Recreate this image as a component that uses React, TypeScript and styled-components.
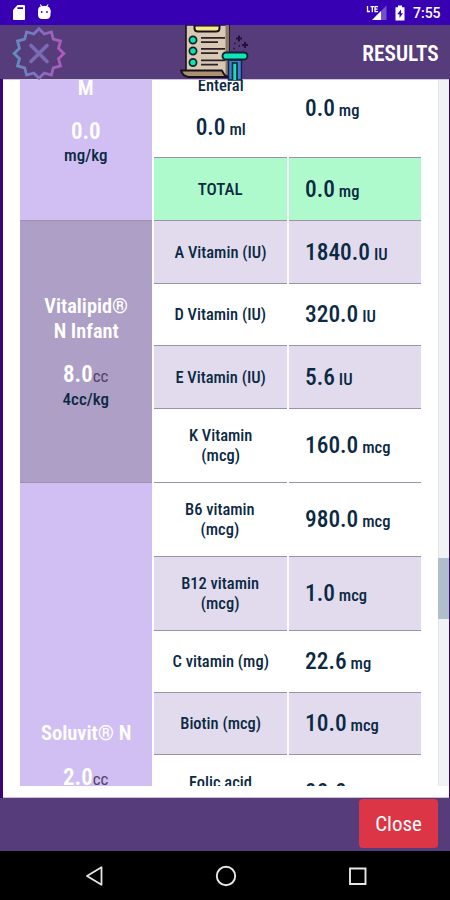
import React from "react";
import styled, { createGlobalStyle, css } from "styled-components";

const Global = createGlobalStyle`
  * { box-sizing: border-box; }
  body { margin: 0; background: #000; font-family: Roboto, sans-serif; font-stretch: 75%; color: #0b2944; }
`;

const Screen = styled.div`
  width: 450px;
  height: 900px;
  display: flex;
  flex-direction: column;
  overflow: hidden;
  background: #3b0478;
`;

const StatusBar = styled.div`
  height: 25px;
  flex: none;
  display: flex;
  align-items: center;
  justify-content: space-between;
  padding: 1px 8px 0 12px;
  background: #3700b3;
  color: #fff;
`;

const StatusGroup = styled.div`
  display: flex;
  align-items: center;
`;

const Clock = styled.span`
  width: 29px;
  margin-left: 7px;
  font-size: 14px;
  font-weight: 500;
  font-stretch: 100%;
`;

const Header = styled.header`
  position: relative;
  z-index: 1;
  height: 54px;
  flex: none;
  display: grid;
  grid-template-columns: 168px 70px 1fr;
  align-items: start;
  padding: 0 11px 0 12px;
  background: #573c7b;
  color: #fff;
`;

const Title = styled.div`
  justify-self: end;
  padding-top: 16px;
`;

const Panel = styled.main`
  height: 719px;
  flex: none;
  margin: 0 1.5px 0 2.5px;
  border-top: 1px solid #cfc5dc;
  border-bottom: 1px solid #c9bfd6;
  background: #fff;
  display: flex;
  align-items: flex-start;
`;

const Viewport = styled.div`
  height: 706px;
  flex: 1;
  overflow: hidden;
  padding-left: 17px;
`;

const Table = styled.div`
  display: grid;
  grid-template-columns: 132.5px 133.5px 132.5px;
  column-gap: 1.5px;
  grid-template-rows: 78px 63px 62.5px 62.5px 62.5px 74.5px 73.5px 74px 62px 62.5px 74px;
`;

const tones = { plain: "#fff", total: "#affacd", tinted: "#e1dbed", lilac: "#d1bff3", mauve: "#ae9fc6" };
type Tone = keyof typeof tones;

const Cell = styled.div<{ $tone: Tone }>`
  display: flex;
  align-items: center;
  justify-content: center;
  text-align: center;
  background: ${p => tones[p.$tone]};
  border-bottom: 1.5px solid #9b92a9;
`;

const ValueCell = styled(Cell)<{ $raise?: number }>`
  justify-content: flex-start;
  padding: 2px 0 ${p => p.$raise || 0}px 16.5px;
  text-align: left;
`;

const GroupCell = styled(Cell)<{ $span: number; $top: number }>`
  grid-row: span ${p => p.$span};
  flex-direction: column;
  justify-content: flex-start;
  padding-top: ${p => p.$top}px;
`;

const Text = styled.div<{ $size: number; $lh: number; $weight?: number; $sx?: number; $origin?: string; $white?: boolean; $mt?: number }>`
  font-size: ${p => p.$size}px;
  line-height: ${p => p.$lh}px;
  font-weight: ${p => p.$weight || 500};
  white-space: pre;
  margin-top: ${p => p.$mt || 0}px;
  ${p => p.$white && css`color: #fff;`}
  transform: scaleX(${p => p.$sx || 1});
  transform-origin: ${p => p.$origin || "center"};
`;

const Unit = styled.span`
  margin-left: 4px;
  font-size: 17px;
  font-weight: 500;
`;

const Dose = styled.span`
  color: #fff;
  font-weight: 600;
`;

const FaintUnit = styled.span`
  font-size: 17px;
  font-weight: 400;
  color: #50466c;
`;

const Scrollbar = styled.div`
  width: 10.5px;
  height: 706px;
  flex: none;
  padding-top: 478px;
  background: #f0f2f3;
  border-left: 1px solid #e1e5e7;
`;

const Thumb = styled.div`
  height: 61px;
  margin-left: -1px;
  background: #aebfc9;
`;

const Footer = styled.footer`
  height: 53px;
  flex: none;
  display: flex;
  justify-content: flex-end;
  align-items: flex-start;
  padding: 1px 12px 0 0;
  background: #573c7b;
`;

const CloseButton = styled.button`
  width: 79px;
  height: 49px;
  display: flex;
  align-items: center;
  justify-content: center;
  padding: 1px 0 0;
  border: 0;
  border-radius: 4px;
  background: #dc3545;
  color: #fff;
  font-family: inherit;
  font-stretch: inherit;
`;

const NavBar = styled.nav`
  height: 49px;
  flex: none;
  display: flex;
  align-items: center;
  justify-content: space-between;
  padding: 0 81px 0 82px;
  background: #000;
`;

const starPoints = (n: number, outer: number, inner: number, c: number) =>
  Array.from({ length: n * 2 }, (_, i) => {
    const r = i % 2 ? inner : outer;
    const a = (Math.PI * i) / n;
    return `${(c + r * Math.cos(a)).toFixed(2)},${(c + r * Math.sin(a)).toFixed(2)}`;
  }).join(" ");

const Badge = () => (
  <svg width="54" height="55" viewBox="0 0 54 55">
    <defs>
      <linearGradient id="badge" gradientUnits="userSpaceOnUse" x1="1" y1="28" x2="53" y2="28">
        <stop offset="0" stopColor="#5d91bd" />
        <stop offset=".5" stopColor="#806fbf" />
        <stop offset="1" stopColor="#b557bb" />
      </linearGradient>
    </defs>
    <g fill="none" stroke="url(#badge)" strokeWidth="2.8">
      <polygon points={starPoints(12, 24.8, 20.2, 27)} transform="translate(0 1.5)" />
      <path d="M19 20.500L35 36.500M35 20.500L19 36.500" stroke="#7c6bb4" strokeWidth="3.600" strokeLinecap="round" />
    </g>
  </svg>
);

const Scroll = () => (
  <svg width="70" height="56" viewBox="180 25 70 56" style={{ display: "block" }}>
    <path d="M186 25h43v51h-43z" fill="#d8c8b4" stroke="#17131c" strokeWidth="1.600" />
    <path d="M225.500 25h3.500v50h-3.500z" fill="#8d7667" />
    <path d="M194.500 24v4q0 3.500 3.500 3.500h18q3.500 0 3.500-3.500v-4" fill="#fde98b" stroke="#17131c" strokeWidth="2" />
    <path d="M194.500 25.800h25" stroke="#17131c" strokeWidth="1.500" />
    {[40, 51, 62.5].map(y => (
      <g key={y}>
        <circle cx="193" cy={y} r="3.600" fill="#14dfae" stroke="#12232b" strokeWidth="1.700" />
        <path d={`M201 ${y - 2.2}h24M201 ${y + 2.2}h17`} stroke="#2a2026" strokeWidth="1.800" />
      </g>
    ))}
    <path d="M181 70.500h41q2 5 5.500 6.500h-39q-6-1-7.500-6.500z" fill="#ad9073" stroke="#17131c" strokeWidth="2" strokeLinejoin="round" />
    <path d="M228.500 60h13v20h-13z" fill="#3b82d2" stroke="#182348" strokeWidth="1.500" />
    <path d="M232.500 80v-17h4.500v17" fill="#16dfc6" stroke="#12232b" strokeWidth="1.600" />
    <rect x="222.500" y="52.500" width="25" height="7" rx="3.500" fill="#0fe5ba" stroke="#12232b" strokeWidth="1.900" />
    <path d="M239 35.500v6M236 38.500h6M245 42v6M242 45h6" stroke="#21132f" strokeWidth="1.900" />
    <path d="M234 43.500h1.500M238.500 46h1.500M233.500 48.500h1.500" stroke="#21132f" strokeWidth="1.500" />
  </svg>
);

const StatusLeft = () => (
  <svg width="42" height="18" viewBox="0 0 42 18" fill="#fff">
    <path d="M5.500 1H12q1 0 1 1v13q0 1-1 1H2q-1 0-1-1V6zM5.500 3.200v1.800h5.500v-1.800z" fillRule="evenodd" />
    <path d="M26 6.500Q26 3 29 2.200L27.800.8l.8-.6L30.200 2h4L35.800.2l.8.6L35.400 2.200Q38.500 3.500 38.500 6.500V9h-12.500z" />
    <path d="M26 6h12.500v4.500q0 4.500-4.500 4.500h-3.500q-4.500 0-4.500-4.500z" />
    <circle cx="29.700" cy="8" r=".9" fill="#3700b3" /><circle cx="35" cy="8" r=".9" fill="#3700b3" />
  </svg>
);

const StatusRight = () => (
  <svg width="40" height="18" viewBox="367 4 40 18">
    <path d="M387.500 5.500V20H373z" fill="#7652ca" />
    <path d="M382 11v9h-9z" fill="#fff" />
    <path d="M368.500 6v5.500h2.500M371.500 6.700h3.500M373.300 6.700v5.500M379 6.700h-3v5h3M376 9.200h2.500" fill="none" stroke="#fff" strokeWidth="1.300" />
    <path d="M399 5.500h4v1.700h2.500v13.300H396.500V7.200H399z" fill="#fff" />
    <path d="M402 9.500l-3.800 4.800h2.300v3.700l3.500-4.800h-2z" fill="#3700b3" />
  </svg>
);

const rows: { name: string; value: string; unit: string; tone: Tone }[] = [
  { name: "A Vitamin (IU)", value: "1840.0", unit: "IU", tone: "tinted" },
  { name: "D Vitamin (IU)", value: "320.0", unit: "IU", tone: "plain" },
  { name: "E Vitamin (IU)", value: "5.6", unit: "IU", tone: "tinted" },
  { name: "K Vitamin\n(mcg)", value: "160.0", unit: "mcg", tone: "plain" },
  { name: "B6 vitamin\n(mcg)", value: "980.0", unit: "mcg", tone: "plain" },
  { name: "B12 vitamin\n(mcg)", value: "1.0", unit: "mcg", tone: "tinted" },
  { name: "C vitamin (mg)", value: "22.6", unit: "mg", tone: "plain" },
  { name: "Biotin (mcg)", value: "10.0", unit: "mcg", tone: "tinted" },
  { name: "Folic acid\n(mcg)", value: "90.0", unit: "mcg", tone: "plain" },
];

const Value = ({ value, unit }: { value: string; unit: string }) => (
  <Text $size={24} $lh={28} $sx={0.975} $origin="left">{value}<Unit>{unit}</Unit></Text>
);

const Group = ({ index }: { index: number }) =>
  index === 0 ? (
    <GroupCell $tone="mauve" $span={4} $top={73}>
      <Text $size={21} $lh={25} $weight={600} $sx={0.97} $white>{"Vitalipid®\nN Infant"}</Text>
      <Text $size={23} $lh={26} $mt={18}><Dose>8.0</Dose><FaintUnit>cc</FaintUnit></Text>
      <Text $size={17} $lh={22} $mt={-1}>4cc/kg</Text>
    </GroupCell>
  ) : (
    <GroupCell $tone="lilac" $span={5} $top={238}>
      <Text $size={21} $lh={25} $weight={600} $sx={0.98} $white>Soluvit® N</Text>
      <Text $size={23} $lh={26} $mt={19}><Dose>2.0</Dose><FaintUnit>cc</FaintUnit></Text>
    </GroupCell>
  );

export default function App() {
  return (
    <Screen>
      <Global />
      <StatusBar>
        <StatusLeft />
        <StatusGroup><StatusRight /><Clock>7:55</Clock></StatusGroup>
      </StatusBar>
      <Header>
        <Badge />
        <Scroll />
        <Title><Text $size={22} $lh={26} $weight={600} $sx={0.97} $origin="right">RESULTS</Text></Title>
      </Header>
      <Panel>
        <Viewport>
          <Table>
            <GroupCell $tone="lilac" $span={2} $top={0}>
              <Text $size={21} $lh={25} $weight={600} $white $mt={-4}>M</Text>
              <Text $size={23} $lh={26} $mt={18}><Dose>0.0</Dose></Text>
              <Text $size={17} $lh={22} $mt={-1}>mg/kg</Text>
            </GroupCell>
            <Cell $tone="plain">
              <div>
                <Text $size={17} $lh={20} $mt={-20} $sx={0.97}>Enteral</Text>
                <Text $size={24} $lh={28} $mt={18} $sx={0.975}>0.0<Unit>ml</Unit></Text>
              </div>
            </Cell>
            <ValueCell $tone="plain" $raise={22}><Value value="0.0" unit="mg" /></ValueCell>
            <Cell $tone="total"><Text $size={17} $lh={20}>TOTAL</Text></Cell>
            <ValueCell $tone="total"><Value value="0.0" unit="mg" /></ValueCell>
            {rows.map((r, i) => (
              <React.Fragment key={r.name}>
                {(i === 0 || i === 4) && <Group index={i} />}
                <Cell $tone={r.tone}><Text $size={17} $lh={20} $sx={0.97}>{r.name}</Text></Cell>
                <ValueCell $tone={r.tone}><Value value={r.value} unit={r.unit} /></ValueCell>
              </React.Fragment>
            ))}
          </Table>
        </Viewport>
        <Scrollbar><Thumb /></Scrollbar>
      </Panel>
      <Footer>
        <CloseButton><Text $size={21} $lh={25} $weight={400}>Close</Text></CloseButton>
      </Footer>
      <NavBar>
        <svg width="22" height="22" viewBox="0 0 22 22"><path d="M19.500 2.200v17.600L5 11z" fill="none" stroke="#e6e6e6" strokeWidth="1.800" strokeLinejoin="round" /></svg>
        <svg width="22" height="22" viewBox="0 0 22 22"><circle cx="11" cy="11" r="9.200" fill="none" stroke="#e6e6e6" strokeWidth="1.900" /></svg>
        <svg width="22" height="22" viewBox="0 0 22 22"><path d="M3 3.500h15.500v15.500H3z" fill="none" stroke="#e6e6e6" strokeWidth="1.900" /></svg>
      </NavBar>
    </Screen>
  );
}
